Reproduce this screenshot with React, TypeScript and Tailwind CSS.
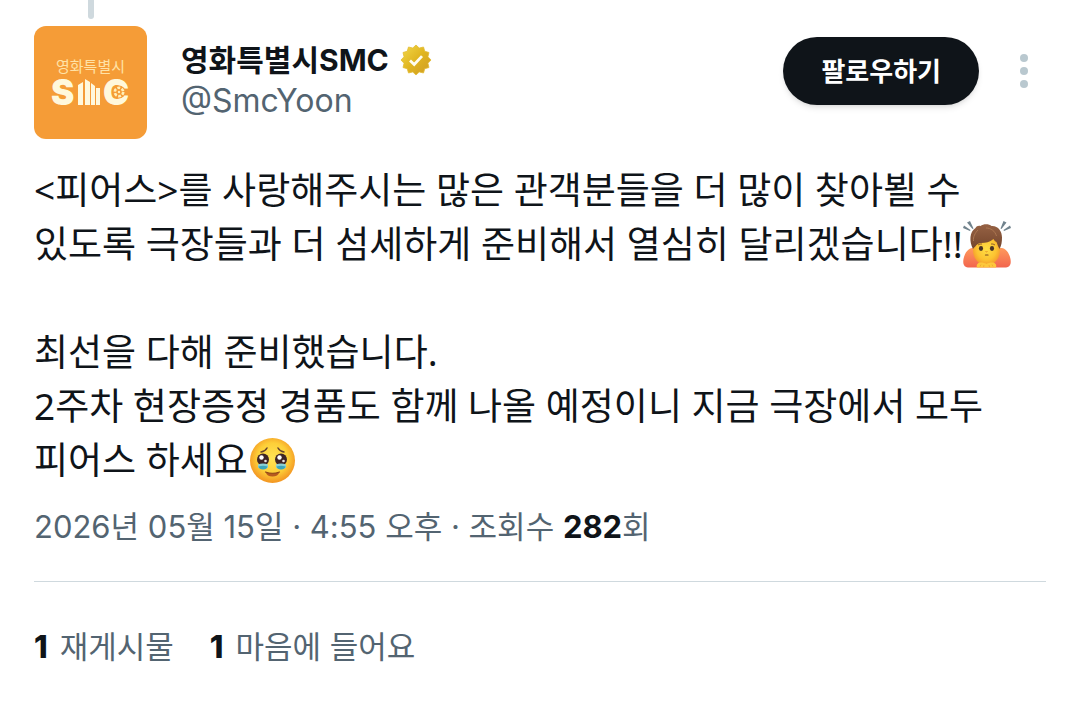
import React from "react";

function Logo() {
  return (
    <svg viewBox="0 0 113 113" className="size-[113px] shrink-0 rounded-xl bg-[#f59c37]" role="img" aria-label="영화특별시 SMC">
      <text x="56.5" y="46" textAnchor="middle" fill="#ffe2a6" className="font-['Noto_Sans_CJK_KR',sans-serif] text-[15px]">
        영화특별시
      </text>
      <g fill="#fff8dc">
        <text x="17" y="79" className="font-['Inter',sans-serif] text-[35px] font-black">S</text>
        <path d="M44 59l5-3v23h-5zM51 53l5 3v23h-5zM57 57l4 3v19h-4zM62 62h4v17h-4z" />
        <text x="69" y="79" className="font-['Inter',sans-serif] text-[35px] font-black">C</text>
      </g>
      <circle cx="85" cy="66" r="6.5" fill="#f59c37" />
      <circle cx="85" cy="66" r="4.2" fill="none" stroke="#fff0b8" strokeWidth="2.6" strokeDasharray="2.9 1.5" />
      <circle cx="85" cy="66" r="1.2" fill="#fff0b8" />
    </svg>
  );
}

const badgePoints = Array.from({ length: 24 }, (_, i) => {
  const radius = i % 2 === 0 ? 15 : 12.4;
  const angle = (i * Math.PI) / 12 - Math.PI / 2;
  return `${16 + radius * Math.cos(angle)},${16 + radius * Math.sin(angle)}`;
}).join(" ");

function VerifiedBadge() {
  return (
    <svg viewBox="0 0 32 32" className="size-8 shrink-0" role="img" aria-label="인증된 계정">
      <defs>
        <linearGradient id="gold" x1="0" y1="0" x2="1" y2="1">
          <stop offset="0" stopColor="#f3d94a" />
          <stop offset="0.5" stopColor="#e0b520" />
          <stop offset="1" stopColor="#cf9a24" />
        </linearGradient>
      </defs>
      <polygon points={badgePoints} fill="url(#gold)" stroke="#e3bd35" strokeWidth="0.8" strokeLinejoin="round" />
      <path d="M10 16.4l4.200 4 7.800-8.300" fill="none" stroke="#fffdf0" strokeWidth="2.8" />
    </svg>
  );
}

function BowingEmoji() {
  return (
    <svg viewBox="0 0 48 48" className="inline-block size-12 align-[-11px]" role="img" aria-label="고개 숙여 인사하는 사람">
      <defs>
        <radialGradient id="bowFace" cx="0.5" cy="0.45" r="0.6">
          <stop offset="0" stopColor="#ffdf45" />
          <stop offset="0.6" stopColor="#fcc331" />
          <stop offset="1" stopColor="#f2902b" />
        </radialGradient>
        <linearGradient id="bowHair" x1="0" y1="0" x2="0" y2="1">
          <stop offset="0" stopColor="#966244" />
          <stop offset="1" stopColor="#74452c" />
        </linearGradient>
        <linearGradient id="bowArm" x1="0" y1="0" x2="0" y2="1">
          <stop offset="0" stopColor="#ff9a5c" />
          <stop offset="1" stopColor="#f2654e" />
        </linearGradient>
      </defs>
      <g fill="#71838d">
        <path d="M4 1.500L7 0l3.500 7.500-1 .5zM0 7l1-2.500L7.500 9l-.5 1zM40.500 0l3 1.500-5 6.500-1-.5zM47 4.500L48 7l-7 3-.5-1z" />
      </g>
      <path d="M13 27C6 26 2 31 .5 38c-1 6 1 8.500 6 8.500h35c5 0 7-2.500 6-8.500-1.500-7-5.500-12-12.500-11z" fill="url(#bowArm)" />
      <ellipse cx="23.500" cy="29.500" rx="13.500" ry="15" fill="url(#bowFace)" />
      <path
        d="M10 28C6 20 6.500 11 12.500 7c1-2 3-2.500 5-2 3-2.500 9-2 11 0 6.500-.5 10.500 5 10.500 11.500 0 4-.5 8-2.500 11.500-1-2-2-4-3-7-1.500-.5-2.500-2-3-3-4 3-7.500 4-12.500 4-3 0-4.500 2-8 6z"
        fill="url(#bowHair)"
      />
      <path d="M15 9c-3 3-5 7-4.500 11M23 7c5 0 9 3 10.500 8" fill="none" stroke="#ac7751" strokeWidth="1" />
      <path d="M15 24q2-1.500 4-1M28 23q2-.5 4 1" fill="none" stroke="#8a5528" strokeWidth="0.9" />
      <ellipse cx="18" cy="27.500" rx="2.100" ry="2.400" fill="#493326" />
      <ellipse cx="29" cy="27.500" rx="2.100" ry="2.400" fill="#493326" />
      <path d="M22.500 30.500q1 .7 2 0" fill="none" stroke="#e68a22" strokeWidth="1" />
      <path d="M22.500 34h2.500" fill="none" stroke="#7c4821" strokeWidth="1.200" strokeLinecap="round" />
      <path d="M14 46.500c-1-3 1-5 4-5 2 0 4 .5 5.500 1.500 1.500-1 3.500-1.500 5.500-1.500 3 0 5 2 4 5z" fill="#fdc83c" />
      <path d="M17 45.500l1-2M20.500 46l.5-2M26.500 46l-.5-2M30 45.500l-1-2" stroke="#efa02e" strokeWidth="0.7" />
    </svg>
  );
}

function TearfulEmoji() {
  return (
    <svg viewBox="0 0 48 48" className="inline-block size-12 align-[-11px]" role="img" aria-label="눈물을 참는 얼굴">
      <defs>
        <radialGradient id="tearFace" cx="0.5" cy="0.45" r="0.52">
          <stop offset="0" stopColor="#ffe455" />
          <stop offset="0.65" stopColor="#fdcf38" />
          <stop offset="1" stopColor="#f49b25" />
        </radialGradient>
      </defs>
      <circle cx="24.500" cy="23.500" r="22.5" fill="url(#tearFace)" />
      <path d="M13 15q4-.5 6-4M30 11q2 3.500 6 4" fill="none" stroke="#63402b" strokeWidth="1.500" strokeLinecap="round" />
      {[15, 33].map((x) => (
        <g key={x}>
          <circle cx={x} cy="22.500" r="6" fill="#3d2425" />
          <path d={`M${x - 5} 27.500q5-2 10 0v3q-5 3.500-10 0z`} fill="#8bd0d5" />
          <path d={`M${x - 4.5} 29.500q4.500-1.500 9 0-.5 3-4.500 3t-4.500-3`} fill="#3ba6bb" />
          <circle cx={x - 1.5} cy="20.500" r="2.200" fill="#fff" />
          <circle cx={x + 2.5} cy="24" r="1.300" fill="#e9e4e2" />
        </g>
      ))}
      <path d="M17.500 35q7 2.500 14 0-1.500 4.500-7 4.500t-7-4.500" fill="#b65a1f" />
      <path d="M17.500 35q7 2.500 14 0" fill="none" stroke="#8a4418" strokeWidth="1.200" strokeLinecap="round" />
    </svg>
  );
}

export default function App() {
  return (
    <main className="min-h-screen bg-white px-[34px] font-['Inter','Noto_Sans_CJK_KR',sans-serif] text-[#0f1419]">
      <div className="h-[26px] pl-[54px]">
        <div className="h-[19px] w-[6px] rounded-b-sm bg-[#cfd9de]" />
      </div>
      <article>
        <header className="flex items-start pr-[11px]">
          <Logo />
          <div className="ml-[34px] min-w-0 flex-1 pt-[14px]">
            <h1 className="flex h-10 items-center text-[30px] font-bold leading-10">
              <span>영화특별시SMC</span>
              <span className="ml-[11px]"><VerifiedBadge /></span>
            </h1>
            <a href="#profile" className="block text-[32px] leading-[42px] text-[#536471]">@SmcYoon</a>
          </div>
          <div className="flex items-center gap-[34px] pt-[11px]">
            <button type="button" className="h-[68px] rounded-full bg-[#0f1419] px-[38px] text-[26px] font-bold text-white shadow-md">
              팔로우하기
            </button>
            <button type="button" aria-label="더 보기" className="flex w-[22px] flex-col items-center gap-[5px]">
              <span className="size-2 rounded-full bg-[#b9c8cf]" />
              <span className="size-2 rounded-full bg-[#b9c8cf]" />
              <span className="size-2 rounded-full bg-[#b9c8cf]" />
            </button>
          </div>
        </header>

        <div className="mt-6 font-['Noto_Sans','Noto_Sans_CJK_KR',sans-serif] text-[37px] leading-[54px]">
          <p>
            &lt;피어스&gt;를 사랑해주시는 많은 관객분들을 더 많이 찾아뵐 수<br />
            <span className="whitespace-nowrap">있도록 극장들과 더 섬세하게 준비해서 열심히 달리겠습니다!!<BowingEmoji /></span>
          </p>
          <p className="mt-[54px]">
            최선을 다해 준비했습니다.<br />
            2주차 현장증정 경품도 함께 나올 예정이니 지금 극장에서 모두<br />
            피어스 하세요<TearfulEmoji />
          </p>
        </div>

        <p className="mt-5 text-[31px] leading-10 text-[#536471]">
          2026년 05월 15일 · 4:55 오후 · 조회수 <strong className="font-bold text-[#0f1419]">282</strong>회
        </p>

        <footer className="mt-[34px] flex gap-[36px] border-t border-[#cfd9de] pt-[45px] text-[31px] leading-10 text-[#536471]">
          <a href="#reposts" className="flex gap-3"><strong className="font-extrabold text-[#0f1419]">1</strong> 재게시물</a>
          <a href="#likes" className="flex gap-3"><strong className="font-extrabold text-[#0f1419]">1</strong> 마음에 들어요</a>
        </footer>
      </article>
    </main>
  );
}
